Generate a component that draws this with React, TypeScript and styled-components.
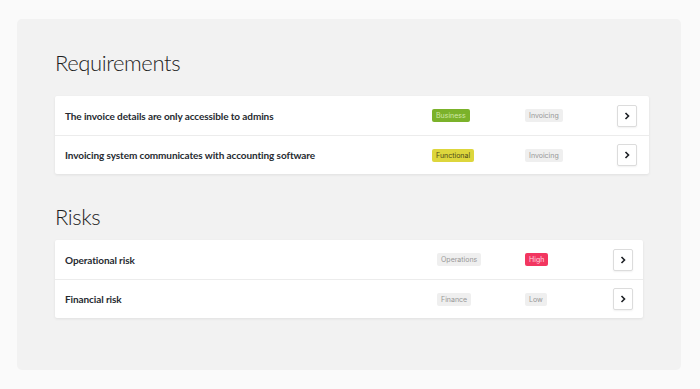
import React from 'react';
import styled, { createGlobalStyle } from 'styled-components';

const GlobalStyle = createGlobalStyle`
    html, body {
        margin: 0;
        padding: 0;
        background: #fafafa;
        font-family: Lato, 'Liberation Sans', sans-serif;
    }
`;

const Page = styled.div`
    width: 700px;
    height: 389px;
    padding: 19px 19px 19px 17px;
    box-sizing: border-box;
`;

const Panel = styled.div`
    background: #f2f2f2;
    border-radius: 5px;
    height: 351px;
    padding: 29px 32px 0 38px;
    box-sizing: border-box;
`;

const Title = styled.h2<{ top: string }>`
    margin: ${(props) => props.top} 0 0 0;
    font-family: Lato, 'Open Sans', sans-serif;
    font-weight: 300;
    font-size: 22px;
    line-height: 30px;
    color: #1e1e1e;
    letter-spacing: -0.4px;
`;

const Card = styled.div<{ width: string; top: string }>`
    width: ${(props) => props.width};
    margin-top: ${(props) => props.top};
    background: #fff;
    border-radius: 2px;
    box-shadow: 0 1px 3px rgba(0, 0, 0, 0.08);
`;

const Row = styled.div<{ columns: string }>`
    display: grid;
    grid-template-columns: ${(props) => props.columns};
    align-items: center;
    height: 39px;
    padding: 0 0 0 10px;
    box-sizing: border-box;

    & + & {
        border-top: 1px solid #ececec;
    }
`;

const Name = styled.div`
    font-family: Lato, 'Liberation Sans', sans-serif;
    font-weight: 700;
    font-size: 10px;
    letter-spacing: -0.1px;
    color: #262a30;
`;

const Cell = styled.div`
    display: flex;
`;

const Tag = styled.span<{ bg: string; fg: string }>`
    display: inline-block;
    font-family: Inter, 'Liberation Sans', sans-serif;
    font-size: 7px;
    line-height: 13px;
    padding: 0 4px;
    border-radius: 2px;
    background: ${(props) => props.bg};
    color: ${(props) => props.fg};
`;

const Arrow = styled.button`
    width: 20px;
    height: 22px;
    padding: 0;
    display: flex;
    align-items: center;
    justify-content: center;
    background: #fff;
    border: 1px solid #dcdcdc;
    border-radius: 2px;
    box-shadow: 0 1px 2px rgba(0, 0, 0, 0.06);
`;

const tagColors: Record<string, [string, string]> = {
    green: ['#7bb22a', '#d2e8a8'],
    yellow: ['#ddd63c', '#4d4a18'],
    red: ['#f23660', '#ffd8e0'],
    gray: ['#efefef', '#979797'],
};

type Item = {
    name: string;
    first: [string, string];
    second: [string, string];
};

const requirements: Item[] = [
    { name: 'The invoice details are only accessible to admins', first: ['Business', 'green'], second: ['Invoicing', 'gray'] },
    { name: 'Invoicing system communicates with accounting software', first: ['Functional', 'yellow'], second: ['Invoicing', 'gray'] },
];

const risks: Item[] = [
    { name: 'Operational risk', first: ['Operations', 'gray'], second: ['High', 'red'] },
    { name: 'Financial risk', first: ['Finance', 'gray'], second: ['Low', 'gray'] },
];

const Chevron = () => (
    <svg width="8" height="8" viewBox="0 0 8 8">
        <path d="M2.5 1 L5.5 4 L2.5 7" fill="none" stroke="#1c1f24" strokeWidth="1.6" />
    </svg>
);

const ItemRow: React.FC<{ item: Item; columns: string }> = ({ item, columns }) => {
    const [a, ac] = item.first;
    const [b, bc] = item.second;
    return (
        <Row columns={columns}>
            <Name>{item.name}</Name>
            <Cell>
                <Tag bg={tagColors[ac][0]} fg={tagColors[ac][1]}>{a}</Tag>
            </Cell>
            <Cell>
                <Tag bg={tagColors[bc][0]} fg={tagColors[bc][1]}>{b}</Tag>
            </Cell>
            <Arrow>
                <Chevron />
            </Arrow>
        </Row>
    );
};

export default function App() {
    return (
        <>
            <GlobalStyle />
            <Page>
                <Panel>
                    <Title top="0">Requirements</Title>
                    <Card width="594px" top="18px">
                        {requirements.map((r) => (
                            <ItemRow key={r.name} item={r} columns="367px 93px 92px 20px" />
                        ))}
                    </Card>
                    <Title top="28px">Risks</Title>
                    <Card width="588px" top="8px">
                        {risks.map((r) => (
                            <ItemRow key={r.name} item={r} columns="372px 88px 88px 19px" />
                        ))}
                    </Card>
                </Panel>
            </Page>
        </>
    );
}
